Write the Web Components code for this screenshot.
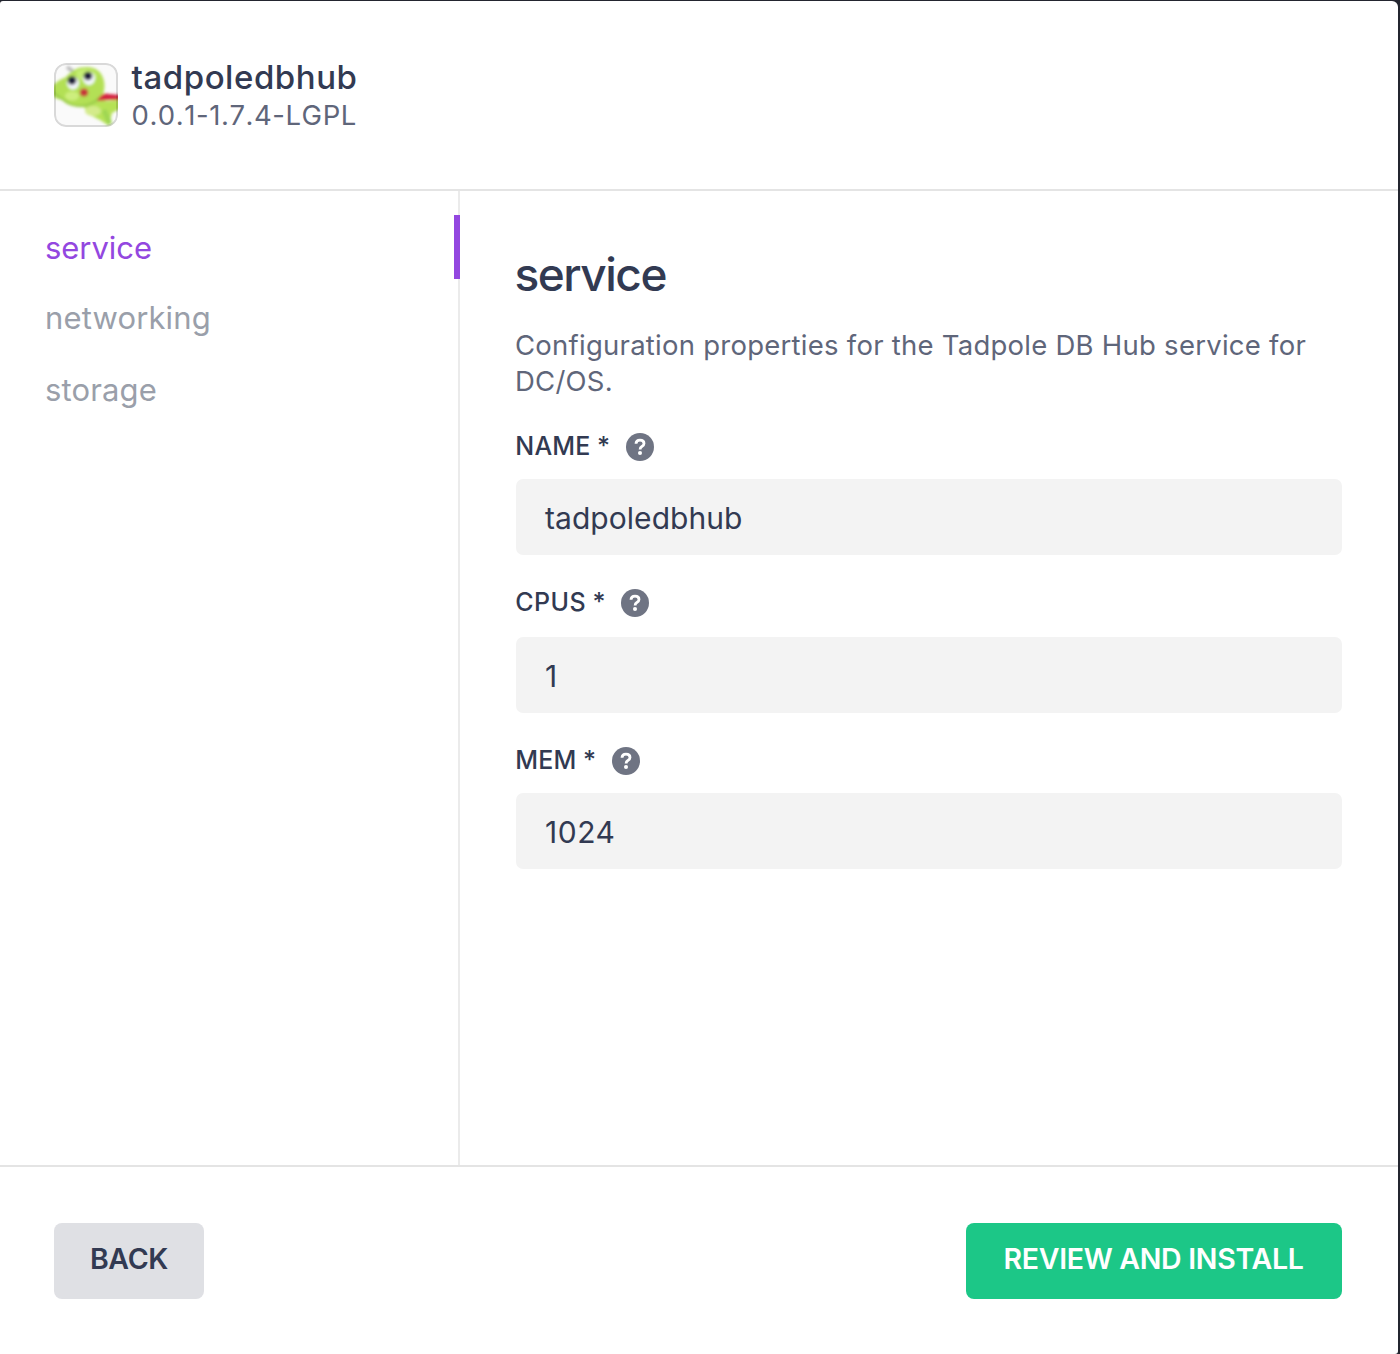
<!DOCTYPE html>
<html lang="en">
<head>
<meta charset="utf-8">
<title>tadpoledbhub</title>
<style>
html,body{margin:0;height:100%}
body{background:#23252f;font-family:Inter,"Liberation Sans",sans-serif;color:#323a52;overflow:hidden}
</style>
</head>
<body>
<install-dialog>
  <package-header slot="header" name="tadpoledbhub" version="0.0.1-1.7.4-LGPL"></package-header>
  <side-tabs slot="tabs">
    <side-tab active>service</side-tab>
    <side-tab>networking</side-tab>
    <side-tab>storage</side-tab>
  </side-tabs>
  <config-section heading="service">
    <span slot="description">Configuration properties for the Tadpole DB Hub service for DC/OS.</span>
    <config-field label="NAME" value="tadpoledbhub" style="--label-ls:.2px"></config-field>
    <config-field label="CPUS" value="1" style="--gap:19px;--label-ls:.4px"></config-field>
    <config-field label="MEM" value="1024" style="--value-ls:.5px;--label-ls:.2px"></config-field>
  </config-section>
  <action-button slot="footer" style="--w:150px">BACK</action-button>
  <action-button slot="footer" primary style="--w:376px">REVIEW AND INSTALL</action-button>
</install-dialog>
<script>
const define = (name, html, setup) => customElements.define(name, class extends HTMLElement {
  constructor() {
    super();
    const t = document.createElement('template');
    t.innerHTML = html;
    this.attachShadow({mode: 'open'}).append(t.content.cloneNode(true));
  }
  connectedCallback() { if (setup) setup(this, s => this.shadowRoot.querySelector(s)); }
});

define('install-dialog', `<style>
:host{display:flex;flex-direction:column;box-sizing:border-box;width:1398px;height:1353px;margin-top:1px;background:#fff;border-radius:3px 6px 3px 0;overflow:hidden}
header{box-sizing:border-box;height:190px;border-bottom:2px solid #e4e4e4;padding:56px 54px 0}
main{flex:1;display:flex;min-height:0}
nav{box-sizing:border-box;width:460px;border-right:2px solid #ebebeb}
section{flex:1;padding:0 56px}
footer{box-sizing:border-box;height:189px;border-top:2px solid #e4e4e4;padding:56px 56px 0 54px;display:flex;justify-content:space-between;align-items:flex-start}
</style><header><slot name="header"></slot></header>
<main><nav><slot name="tabs"></slot></nav><section><slot></slot></section></main>
<footer><slot name="footer"></slot></footer>`);

define('tadpole-logo', `<style>
:host{display:block;box-sizing:border-box;width:64px;height:64px;border-radius:12px;overflow:hidden;background:#fafafa}
svg{display:block}
</style><svg width="64" height="64" viewBox="0 0 64 64">
<defs><filter id="b" x="-10%" y="-10%" width="120%" height="120%"><feGaussianBlur stdDeviation="1.4"/></filter></defs>
<g filter="url(#b)">
<path d="M13 4L20 9" stroke="#b8b8b8" stroke-width="3.500"/>
<path d="M45 33L52 38L66 37V46L58 50L55 63L46 57L34 51L29 42Z" fill="#b6e257"/>
<path d="M-2 24C2 18 8 16 12 14C18 7 24 4 33 4C42 4 48 9 50 18C52 27 48 37 42 40C35 45 27 45 20 43C14 42 11 40 8 37C4 36-2 35-2 30Z" fill="#b3e055"/>
<path d="M22 9C29 4 40 6 43 13C40 20 29 19 24 15Z" fill="#c5ee74"/>
<path d="M-1 28C3 34 9 36 14 40C20 44 36 45 45 35" stroke="#98ca49" stroke-width="2" fill="none"/>
<ellipse cx="18" cy="33" rx="7" ry="4.500" fill="#cdee7e"/>
<ellipse cx="39" cy="48" rx="8" ry="5" fill="#d4eb8b"/>
<path d="M50 47L56 61" stroke="#9fd653" stroke-width="5"/>
<ellipse cx="19" cy="20" rx="6" ry="6.500" fill="#f4f8ff"/><ellipse cx="35" cy="15.500" rx="6" ry="6.500" fill="#f4f8ff"/>
<ellipse cx="18" cy="17.500" rx="4.400" ry="4.200" fill="#1d1b3b"/><ellipse cx="34" cy="13" rx="4.400" ry="4.200" fill="#1d1b3b"/>
<ellipse cx="30" cy="29.500" rx="4.200" ry="4" fill="#c6353a"/>
<path d="M43 38C46 32 50 29 55 31L66 32V37L55 37Z" fill="#d42440"/>
</g><rect x="1" y="1" width="62" height="62" rx="11" fill="none" stroke="#000" stroke-opacity=".13" stroke-width="2"/></svg>`);

define('package-header', `<style>
:host{display:flex;gap:14px;align-items:flex-start}
tadpole-logo{margin-top:6px}
.n{margin-left:-.5px;font-size:33px;line-height:40px;font-weight:500;letter-spacing:.55px;white-space:nowrap}
.v{margin-left:-.5px;font-size:27.5px;line-height:36px;color:#5f667a;letter-spacing:.55px;font-kerning:none;white-space:nowrap}
</style><tadpole-logo></tadpole-logo><div><div class="n"></div><div class="v"></div></div>`,
(el, $) => { $('.n').textContent = el.getAttribute('name'); $('.v').textContent = el.getAttribute('version'); });

define('side-tabs', `<style>:host{display:flex;flex-direction:column;padding-top:24px;margin-right:-2px}</style><slot></slot>`);

define('side-tab', `<style>
:host{display:block;height:72px;font-size:31px;color:#9a9faa;letter-spacing:.15px}
div{box-sizing:border-box;height:64px;line-height:66px;padding-left:45px}
:host([active]){color:#9347e0;height:70px;letter-spacing:-.05px}
:host([active]) div{border-right:6px solid #9347e0}
</style><div><slot></slot></div>`);

define('config-section', `<style>
:host{display:block}
h1{margin:55px 0 0 -1.5px;font-size:46px;line-height:56px;font-weight:500;letter-spacing:-1.5px}
p{margin:25px 0 33px -1px;font-size:27.5px;line-height:36px;letter-spacing:.25px;color:#5f667a}
</style><h1></h1><p><slot name="description"></slot></p><slot></slot>`,
(el, $) => { $('h1').textContent = el.getAttribute('heading'); });

define('help-icon', `<style>:host{display:block;width:28px;height:28px}svg{display:block}</style><svg width="28" height="28" viewBox="0 0 28 28"><circle cx="14" cy="14" r="14" fill="#6f7483"/>
<path d="M10 10.800C10.100 8.300 11.700 7.200 14 7.200C16.400 7.200 18 8.400 18 10.400C18 12 17 12.800 15.800 13.500C14.500 14.200 14.100 14.800 14.100 16.400" fill="none" stroke="#fff" stroke-width="2.800"/>
<circle cx="14" cy="20" r="2.050" fill="#fff"/></svg>`);

define('config-field', `<style>
:host{display:block;margin-bottom:33px}
label{display:flex;align-items:center;height:30px;margin-left:-.7px;font-size:25px;font-weight:500;letter-spacing:var(--label-ls,.3px);word-spacing:-.5px}
span{line-height:28px;margin-top:-2px;white-space:nowrap}
help-icon{margin-left:15.500px}
.i{box-sizing:border-box;height:76px;margin-top:var(--gap,17px);padding-left:29px;border-radius:7px;background:#f3f3f3;font-size:30px;line-height:79px;letter-spacing:var(--value-ls,.05px)}
</style><label><span></span><help-icon></help-icon></label><div class="i"></div>`,
(el, $) => { $('span').textContent = el.getAttribute('label') + ' *'; $('.i').textContent = el.getAttribute('value'); });

define('action-button', `<style>
:host{display:block;width:var(--w);height:76px;border-radius:8px;background:#dfe0e4;text-align:center;font-size:28.5px;font-weight:600;letter-spacing:-.3px;line-height:72px;white-space:nowrap}
:host([primary]){background:#1cc787;color:#fff;text-indent:-1px}
</style><slot></slot>`);
</script>
</body>
</html>
